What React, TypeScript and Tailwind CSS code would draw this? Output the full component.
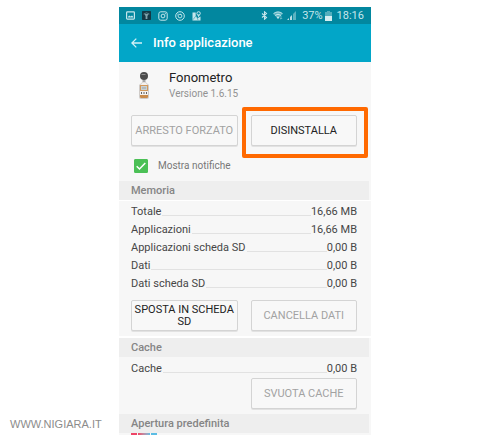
import type { ReactNode } from "react";
import clsx from "clsx";

const MEMORY_ROWS = [
    { label: "Totale", value: "16,66 MB" },
    { label: "Applicazioni", value: "16,66 MB" },
    { label: "Applicazioni scheda SD", value: "0,00 B" },
    { label: "Dati", value: "0,00 B" },
    { label: "Dati scheda SD", value: "0,00 B" },
];

function StatusBar() {
    return (
        <div className="flex h-[17px] items-center justify-between bg-[#02879f] px-[7px] text-[#c5e6ec]">
            <div className="flex items-center gap-[7px]">
                {/* Picture */}
                <svg viewBox="0 0 9 9" className="size-[9px]" fill="none">
                    <rect x="0.6" y="0.9" width="7.8" height="7.2" rx="0.8" stroke="currentColor" strokeWidth="1.2" />
                    <path d="M2 6.5V5.8l1.3-1.3 1.2.9L6 4.5l1.2 1.3v.7z" fill="currentColor" />
                </svg>
                {/* Hotspot */}
                <svg viewBox="0 0 9 9" className="size-[9px]" fill="none">
                    <rect width="9" height="9" rx="0.7" fill="#143845" />
                    <path d="M1.6 3Q4.5.7 7.4 3" stroke="#6d939b" strokeWidth="0.8" />
                    <path d="M2.3 3h4.4L5.4 5v3H3.6V5z" fill="#7fa3ab" />
                </svg>
                {/* Instagram */}
                <svg viewBox="0 0 10 10" className="size-[10px]" fill="none" stroke="currentColor">
                    <rect x="0.8" y="0.8" width="8.4" height="8.4" rx="2" />
                    <circle cx="5" cy="5" r="1.9" />
                    <circle cx="7.4" cy="2.6" r="0.3" />
                </svg>
                {/* Sync */}
                <svg viewBox="0 0 10 10" className="size-[10px]" fill="none" stroke="currentColor">
                    <circle cx="5" cy="5" r="4.3" />
                    <path d="M3.1 2.6V5a1.9 1.9 0 1 0 1.9-1.9M3.8 3.9 5 3.1 6.2 4" strokeWidth="0.9" />
                </svg>
                {/* Map pin */}
                <svg viewBox="0 0 9 10" className="h-[10px] w-[9px]" fill="none">
                    <path d="M.5 1.5h3.2v2.8l2 3 2.8-1.8v4H.5z" fill="currentColor" />
                    <circle cx="6.6" cy="2.4" r="1.7" stroke="currentColor" />
                    <path d="M5.4 3.8h2.4L6.6 6.6z" fill="currentColor" />
                    <path d="m1 8.7 3.2-4.2 1.9 4.6" stroke="#02879f" strokeWidth="0.5" />
                </svg>
            </div>
            <div className="flex items-center">
                <svg viewBox="0 0 7 9" className="mr-[5px] h-[9px] w-[7px]" fill="none" stroke="currentColor" strokeWidth="1.1">
                    <path d="M1 2.5 5.5 6.4 3.5 8.2V.8l2 1.8L1 6.5" />
                </svg>
                <svg viewBox="0 0 10 9" className="mr-1 h-[9px] w-[10px]" fill="none">
                    <path d="M.5 3Q5-1 9.5 3L5 8z" fill="#5cb3c1" />
                    <path d="M.5 2.6Q5-.8 9.5 2.6M2.1 4.4Q5 2 7.9 4.4" stroke="#cdeaf0" />
                    <path d="M3.6 5.8h2.8L5 8z" fill="#cdeaf0" />
                    <path d="M8 5v3M6.8 7 8 8.2 9.2 7" stroke="#8bc9d3" strokeWidth="0.7" />
                </svg>
                <svg viewBox="0 0 9 9" className="mr-[6px] h-[9px] w-[9px]">
                    <path d="M9 0v9H6V3z" fill="#5cb3c1" />
                    <path d="M0 9 2 7v2zM3 6l2-2v5H3z" fill="#b8dfe6" />
                </svg>
                <span className="text-[11px] leading-none">37%</span>
                <svg viewBox="0 0 7 10" className="ml-[2px] mr-[5px] h-[10px] w-[7px]">
                    <path d="M2 0h3v1h2v5H0V1h2z" fill="#52aebd" />
                    <path d="M0 5h7v5H0z" fill="#d4edf1" />
                </svg>
                <span className="text-[11px] leading-none">18:16</span>
            </div>
        </div>
    );
}

function SoundMeterIcon() {
    return (
        <svg viewBox="0 0 10 28" className="h-7 w-[10px]">
            <circle cx="5" cy="4" r="4" fill="#4c4c4c" />
            <path d="M2.5 2.5h4" stroke="#909090" strokeWidth="1" />
            <path d="M3.5 8h3v2.5h-3z" fill="#a5a5a5" />
            <path d="M3.5 10h3L10 13v12q0 2-2 2H2q-2 0-2-2V13z" fill="#cfcbc8" />
            <path d="M3.7 10.5h2.6L9 13.2V25q0 1-1 1H2q-1 0-1-1V13.200z" fill="#f4f1ee" />
            <path d="M1 13h8v6H1z" fill="#d39a5c" />
            <path d="M2 14h6v4H2z" fill="#c9d0d2" />
            <path d="M3 16h4" stroke="#9aa2a4" />
            <path d="M1 23h8v2q0 1-1 1H2q-1 0-1-1z" fill="#c98b4b" />
            <path d="M2 21h1M4.500 21h1M7 21h1" stroke="#333333" strokeWidth="1.4" />
        </svg>
    );
}

function ActionButton({ children, disabled }: { children: ReactNode; disabled?: boolean }) {
    return (
        <button
            type="button"
            disabled={disabled}
            className={clsx(
                "h-[31px] w-full rounded-[2px] border border-[#d4d4d4] bg-[#f8f8f8] text-[11px] leading-3 shadow-[0_1px_0_#e2e2e2]",
                disabled ? "text-[#a2a2a2]" : "text-[#222222]"
            )}
        >
            {children}
        </button>
    );
}

function SectionTitle({ children }: { children: ReactNode }) {
    return (
        <h2 className="mr-[2px] h-[19px] bg-[#eeeeee] pl-3 text-[11px] font-medium leading-[19px] text-[#858585]">
            {children}
        </h2>
    );
}

function StorageRow({ label, value }: { label: string; value: string }) {
    return (
        <div className="flex h-[18px] items-center text-[11px] text-[#464646]">
            <dt>{label}</dt>
            <span className="ml-px mt-[7px] h-px flex-1 bg-[#e2e2e2]" />
            <dd>{value}</dd>
        </div>
    );
}

export default function App() {
    return (
        <div className="flex min-h-screen items-start bg-white pb-1 pr-[129px] pt-[7px] font-['Roboto',sans-serif]">
            <footer className="w-[119px] shrink-0 self-end pb-1 pl-[10px] font-['Liberation_Sans',sans-serif] text-[11px] leading-4 text-[#8c8c8c]">
                WWW.NIGIARA.IT
            </footer>

            <main className="min-w-0 flex-1 bg-[#f7f7f7]">
                <StatusBar />

                <header className="flex h-[38px] items-center gap-[11px] bg-[#02a6c8] pl-3 text-white">
                    <button type="button" aria-label="Indietro">
                        <svg viewBox="0 0 11 10" className="h-[10px] w-[11px]" fill="none" stroke="#d3f1f6" strokeWidth="1.3">
                            <path d="M11 5H1M5.3.6.9 5l4.4 4.4" />
                        </svg>
                    </button>
                    <h1 className="text-[13px] font-medium leading-4">Info applicazione</h1>
                </header>

                {/* App name and version */}
                <div className="flex items-center gap-5 pb-[14px] pl-5 pt-2">
                    <SoundMeterIcon />
                    <div>
                        <p className="text-[13px] leading-4 text-[#222222]">Fonometro</p>
                        <p className="text-[10px] leading-[15px] text-[#929292]">Versione 1.6.15</p>
                    </div>
                </div>

                <div className="grid grid-cols-2 gap-[13px] pl-3 pr-[14px]">
                    <ActionButton disabled>ARRESTO FORZATO</ActionButton>
                    <div className="relative">
                        <ActionButton>DISINSTALLA</ActionButton>
                        {/* Highlight around the uninstall button */}
                        <div className="pointer-events-none absolute -bottom-3 -left-[9px] -right-[11px] -top-2 rounded-[2px] border-4 border-[#ff6900]" />
                    </div>
                </div>

                <label className="flex h-[35px] items-center gap-[10px] pl-[15px] pt-1 text-[10px] text-[#777777]">
                    <span className="grid size-[14px]">
                        <input
                            type="checkbox"
                            defaultChecked
                            className="peer col-start-1 row-start-1 size-[14px] appearance-none rounded-[1px] border border-[#4bc056] checked:bg-[#4bc056]"
                        />
                        <svg
                            viewBox="0 0 14 14"
                            className="pointer-events-none invisible col-start-1 row-start-1 size-[14px] peer-checked:visible"
                            fill="none"
                            stroke="white"
                            strokeWidth="1.5"
                        >
                            <path d="m2.7 7.2 2.8 2.8 5.8-6" />
                        </svg>
                    </span>
                    Mostra notifiche
                </label>

                <section>
                    <SectionTitle>Memoria</SectionTitle>
                    <dl className="border-t border-white pb-[7px] pl-3 pr-[14px] pt-[2px]">
                        {MEMORY_ROWS.map((row) => (
                            <StorageRow key={row.label} label={row.label} value={row.value} />
                        ))}
                    </dl>
                    <div className="grid grid-cols-2 gap-[13px] border-b-2 border-white pb-[5px] pl-3 pr-[14px]">
                        <ActionButton>SPOSTA IN SCHEDA SD</ActionButton>
                        <ActionButton disabled>CANCELLA DATI</ActionButton>
                    </div>
                </section>

                <section>
                    <SectionTitle>Cache</SectionTitle>
                    <dl className="pl-3 pr-[14px] pt-[3px]">
                        <StorageRow label="Cache" value="0,00 B" />
                    </dl>
                    <div className="grid grid-cols-2 gap-[13px] pb-[5px] pl-3 pr-[14px]">
                        <div className="col-start-2">
                            <ActionButton disabled>SVUOTA CACHE</ActionButton>
                        </div>
                    </div>
                </section>

                <section>
                    <SectionTitle>Apertura predefinita</SectionTitle>
                    {/* Top edge of the next icon in the list */}
                    <div className="flex h-[2px] gap-px pl-3">
                        <span className="w-[6px] bg-[#ee4466]" />
                        <span className="w-3 bg-linear-to-r from-[#ee4466] to-[#5bbde4]" />
                        <span className="w-[6px] bg-[#5bbde4]" />
                    </div>
                </section>
            </main>
        </div>
    );
}
